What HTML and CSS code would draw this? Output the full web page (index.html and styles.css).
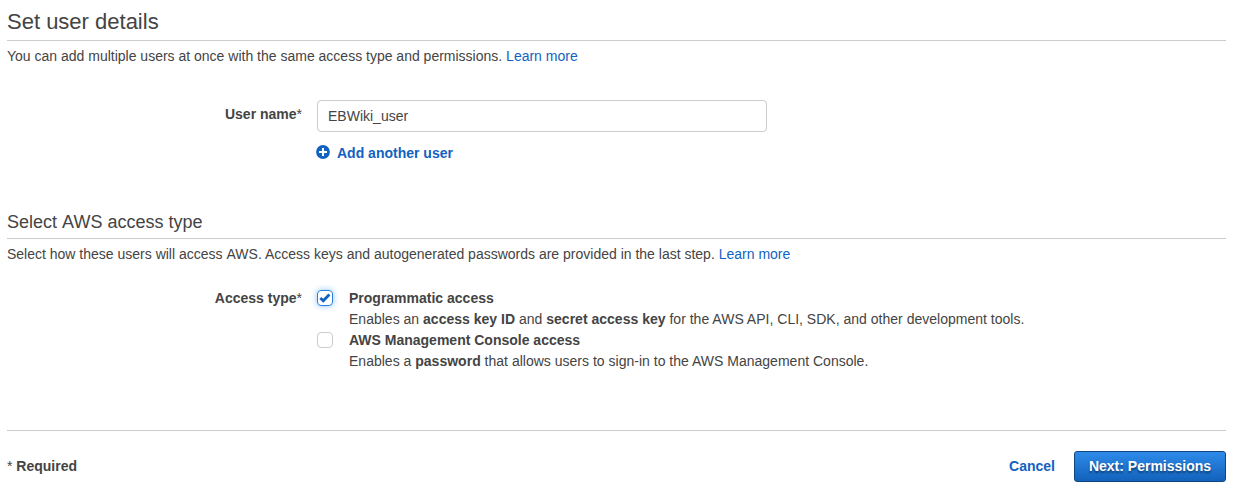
FILE: index.html
```html
<!DOCTYPE html>
<html lang="en">
<head>
<meta charset="utf-8">
<title>Set user details</title>
<link rel="stylesheet" href="styles.css">
</head>
<body>
<main class="page">
  <section class="details">
    <h1 class="title">Set user details</h1>
    <p class="intro">You can add multiple users at once with the same access type and permissions. <a class="link" href="#">Learn more</a></p>
    <div class="row name-row">
      <label class="label" for="user">User name<span class="star">*</span></label>
      <div class="field">
        <input class="input" id="user" type="text" value="EBWiki_user">
        <a class="add" href="#">
          <svg class="plus" viewBox="0 0 14 14"><circle cx="7" cy="7" r="6.9" fill="#1262bf"/><path d="M7 3v8M3 7h8" stroke="#fff" stroke-width="2.1"/></svg>
          <span>Add another user</span>
        </a>
      </div>
    </div>
  </section>
  <section class="access">
    <h2 class="subtitle">Select <span class="aws">AWS</span> access type</h2>
    <p class="intro">Select how these users will access <span class="aws">AWS.</span> Access keys and autogenerated passwords are provided in the last step. <a class="link" href="#">Learn more</a></p>
    <div class="row access-row">
      <span class="label">Access type<span class="star">*</span></span>
      <div class="options">
        <div class="option">
          <span class="box checked"><svg class="tick" viewBox="0 0 14 14"><path d="M2.3 7L5.3 9.8L11.4 3.6" fill="none" stroke="#1262bf" stroke-width="2.9"/></svg></span>
          <div><b>Programmatic access</b><p class="hint">Enables an <b>access key ID</b> and <b>secret access key</b> for the AWS API, CLI, SDK, and other development tools.</p></div>
        </div>
        <div class="option">
          <span class="box"></span>
          <div><b>AWS Management Console access</b><p class="hint">Enables a <b>password</b> that allows users to sign-in to the AWS Management Console.</p></div>
        </div>
      </div>
    </div>
  </section>
  <footer class="footer">
    <span class="required"><span class="star">*</span> Required</span>
    <a class="cancel" href="#">Cancel</a>
    <button class="next" type="button">Next: Permissions</button>
  </footer>
</main>
</body>
</html>
```
FILE: styles.css
```css
* { box-sizing: border-box; }
body { margin: 0; background: #fff; color: #444; font: 14px/21px "Liberation Sans", Arial, sans-serif; }
a { text-decoration: none; color: #1262bf; }
p, h1, h2 { margin: 0; }
.page { width: 1226px; height: 494px; padding-left: 7px; display: flex; flex-direction: column; }
.details { height: 205px; }
.title { height: 41px; padding-top: 7px; border-bottom: 1px solid #ccc; font-size: 22px; line-height: 30px; font-weight: 400; }
.intro { padding-top: 5px; white-space: nowrap; }
.aws { letter-spacing: 0.04px; }
.row { display: flex; }
.label { width: 295px; text-align: right; font-weight: 700; }
.star { font-weight: 400; }
.name-row { padding-top: 33px; }
.name-row .label { padding-top: 4px; }
.field { margin-left: 15px; display: flex; flex-direction: column; gap: 11px; }
.input { width: 450px; height: 32px; padding: 0 10px; border: 1px solid #ccc; border-radius: 4px; color: #444; font: inherit; outline: none; }
.add { display: flex; align-items: flex-start; gap: 7px; margin-left: -1px; font-weight: 700; }
.plus { width: 14px; height: 14px; margin-top: 2px; }
.access { height: 225px; }
.subtitle { height: 34px; padding-top: 5px; border-bottom: 1px solid #ccc; font-size: 18px; line-height: 24px; font-weight: 400; }
.access-row { padding-top: 23px; }
.options { margin-left: 15px; }
.option { display: flex; gap: 16px; }
.hint { letter-spacing: 0.01px; }
.box { width: 16px; height: 16px; margin-top: 2px; border: 1px solid #ccc; border-radius: 4px; flex: none; display: flex; }
.checked { border-color: #2a80d8; box-shadow: 0 0 6px #8cc4f8; }
.tick { width: 14px; height: 14px; }
.footer { height: 64px; border-top: 1px solid #ccc; display: flex; align-items: center; padding-top: 8px; }
.required { font-weight: 700; margin-right: auto; }
.cancel { font-weight: 700; margin-right: 19px; }
.next { width: 152px; height: 31px; padding: 0; border: 1px solid #0f4580; border-radius: 3px; background: linear-gradient(#2e8ae9, #1262bb); color: #fff; font: bold 14px/21px "Liberation Sans", Arial, sans-serif; text-shadow: 0 2px 2px rgba(0, 0, 0, 0.45); }
```
